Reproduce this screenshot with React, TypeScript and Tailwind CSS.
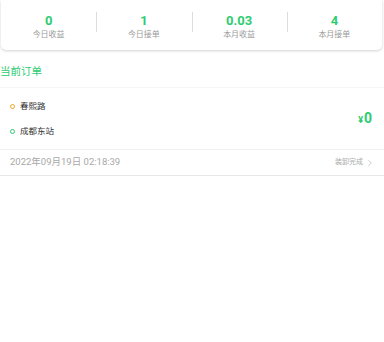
import { ChevronRight } from "lucide-react";

const STATS = [
  { value: "0", label: "今日收益" },
  { value: "1", label: "今日接单" },
  { value: "0.03", label: "本月收益" },
  { value: "4", label: "本月接单" },
];

export default function App() {
  return (
    <div className="w-[384px] h-[342px] bg-white font-['Roboto','Noto_Sans_CJK_SC',sans-serif]">
      {/* stats card */}
      <div className="mx-[1px] w-[381px] h-[50px] rounded-b-[5px] bg-white shadow-[0_1px_3px_rgba(0,0,0,0.18)] flex items-center">
        {STATS.map((s, i) => (
          <div key={s.label} className="flex-1 relative flex flex-col items-center">
            {i > 0 && <div className="absolute left-0 top-[2px] h-[20px] w-px bg-[#dcdcdc]" />}
            <div className="text-[13px] leading-[16px] font-bold text-[#2ecc71] mt-[3px]">{s.value}</div>
            <div className="text-[8px] leading-[12px] text-[#9a9a9a]">{s.label}</div>
          </div>
        ))}
      </div>

      {/* title */}
      <div className="h-[38px] flex items-center text-[10.5px] text-[#2ecc71] border-b border-[#f6f6f6] pt-[6px]">
        当前订单
      </div>

      {/* order */}
      <div className="h-[62px] flex items-center justify-between pl-[10px] pr-[12px] border-b border-[#f0f0f0]">
        <div className="flex flex-col gap-[13px] pt-[1px]">
          <div className="flex items-center gap-[5px] h-[12px]">
            <span className="w-[5px] h-[5px] rounded-full border-[1.5px] border-[#f5a623]" />
            <span className="text-[8.5px] text-[#333]">春熙路</span>
          </div>
          <div className="flex items-center gap-[5px] h-[12px]">
            <span className="w-[5px] h-[5px] rounded-full border-[1.5px] border-[#2ecc71]" />
            <span className="text-[8.5px] text-[#333]">成都东站</span>
          </div>
        </div>
        <div className="text-[#2ecc71] flex items-baseline">
          <span className="text-[9px] font-bold">¥</span>
          <span className="text-[14px] font-bold ml-[1px]">0</span>
        </div>
      </div>

      <div className="h-[26px] flex items-center justify-between pl-[10px] pr-[9px] border-b border-[#e8e8e8]">
        <span className="text-[9.5px] text-[#a8a8a8]">2022年09月19日 02:18:39</span>
        <span className="flex items-center text-[7px] text-[#aaa]">
          装卸完成
          <ChevronRight size={10} strokeWidth={1.5} className="ml-[2px]" />
        </span>
      </div>
    </div>
  );
}
